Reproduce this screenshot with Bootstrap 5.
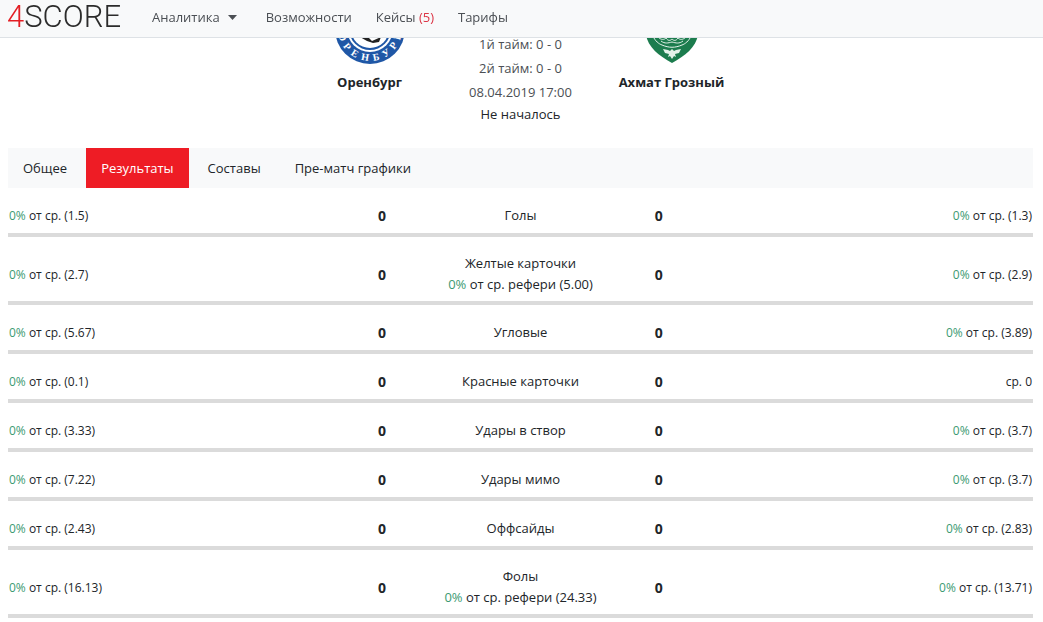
<!DOCTYPE html>
<html lang="ru">
<head>
<meta charset="utf-8">
<meta name="viewport" content="width=device-width, initial-scale=1">
<title>4SCORE — Оренбург – Ахмат Грозный</title>
<link href="https://cdn.jsdelivr.net/npm/bootstrap@5.3.0/dist/css/bootstrap.min.css" rel="stylesheet">
<style>
  body { font-family: "Open Sans", "Noto Sans", sans-serif; font-size: 13px; line-height: 21px; color: #212529; }
  .topbar { height: 38px; background: #f8f9fa; border-bottom: 1px solid #dee2e6; padding: 0 7px 3px; }
  .brand { font-family: Roboto, "Open Sans", sans-serif; font-weight: 300; font-size: 31px; line-height: 32px; color: #2b2b2b; width: 117px; }
  .brand span { color: #e31e24; }
  .topbar .nav-link { color: #4b4f54; padding: 0 12px; }
  .topbar .nav-link .count { color: #dc3545; }
  .caret { width: 9px; height: 5px; margin: 0 5px 0 8px; }
  .team { width: 150px; }
  .team h2 { font-size: 13px; line-height: 21px; font-weight: 700; }
  .crest { height: 65px; margin-bottom: 7px; }
  .facts { width: 152px; padding-top: 32px; color: #4b4f54; }
  .facts div { line-height: 24px; }
  .facts .state { line-height: 20px; color: #212529; }
  .tabs { background: #f8f9fa; height: 40px; margin-top: 24px; gap: 4px; }
  .tabs .nav-link { color: #212529; border-radius: 0; padding: 9px 15px; line-height: 22px; }
  .tabs .nav-link.active { background: #ee1c25; color: #fff; }
  .stats { table-layout: fixed; }
  .stats td, .stats th { border-bottom: 4px solid #dbdbdb; padding: 16px 1px 6px; line-height: 21px; }
  .stats .side { width: 33.5%; font-size: 12px; }
  .stats .num { width: 6%; font-size: 14px; font-weight: 700; line-height: 23px; }
  .pct { color: #3c9a72; }
  .page { padding: 0 10px 0 8px; }
</style>
</head>
<body>
<nav class="topbar fixed-top d-flex align-items-center" aria-label="Главное меню">
  <a class="brand text-decoration-none" href="#"><span>4</span>SCORE</a>
  <ul class="nav ms-3">
    <li><a class="nav-link d-flex align-items-center" href="#">Аналитика<svg class="caret" viewBox="0 0 9 5" aria-hidden="true"><path d="M0 0h9L4.500 5z" fill="currentColor"/></svg></a></li>
    <li><a class="nav-link" href="#">Возможности</a></li>
    <li><a class="nav-link" href="#">Кейсы <span class="count">(5)</span></a></li>
    <li><a class="nav-link" href="#">Тарифы</a></li>
  </ul>
</nav>
<main class="page">
  <header class="d-flex justify-content-center text-center">
    <div class="team">
      <svg class="crest" width="70" height="65" viewBox="0 6 70 65" aria-hidden="true">
        <defs><path id="ring" d="M3 35a32 32 0 0 0 64 0"/></defs>
        <circle cx="35" cy="35" r="35" fill="#1f57a6"/>
        <circle cx="35" cy="35" r="23" fill="#fff"/>
        <circle cx="35" cy="35" r="21" fill="#1f57a6"/>
        <circle cx="35" cy="35" r="19" fill="#fff"/>
        <path d="M25 43l9 1 3 3 9-4-2 5-6 1-6-2z" fill="#222"/>
        <text font-family="Liberation Serif, serif" font-weight="700" font-size="10" fill="#fff" text-anchor="middle"><textPath href="#ring" startOffset="50%">О&nbsp;&nbsp;Р&nbsp;&nbsp;Е&nbsp;&nbsp;Н&nbsp;&nbsp;Б&nbsp;&nbsp;У&nbsp;&nbsp;Р&nbsp;&nbsp;Г</textPath></text>
      </svg>
      <h2 class="mb-0">Оренбург</h2>
    </div>
    <div class="facts">
      <div>1й тайм: 0 - 0</div>
      <div>2й тайм: 0 - 0</div>
      <div>08.04.2019 17:00</div>
      <div class="state">Не началось</div>
    </div>
    <div class="team">
      <svg class="crest" width="70" height="65" viewBox="0 6 70 65" aria-hidden="true">
        <path d="M9 5h52v36c-2 12-13 21-26 28C22 62 11 53 9 41z" fill="#1c7c4e"/>
        <g fill="none" stroke="#e4f2ea" stroke-width="1">
          <path d="M16 42c2 5 6 8 9 9 7 3 13 3 20 0 3-1 7-4 9-9"/>
          <path d="M21 43c3 3 6 3 8 1 2 3 4 3 6 1 2 2 4 2 6-1 2 2 5 2 8-1"/>
          <path d="M24 47c4 3 7 2 11 1 4 1 7 2 11-1"/>
        </g>
        <path d="M26 55l5 1 2 1 2-2 2 2 2-1 5-1-2 4-4 1 1 3-2-1-2 3-2-3-2 1 1-3-4-1z" fill="#e4f2ea"/>
      </svg>
      <h2 class="mb-0">Ахмат Грозный</h2>
    </div>
  </header>
  <ul class="nav tabs">
    <li><a class="nav-link" href="#">Общее</a></li>
    <li><a class="nav-link active" href="#" aria-current="page">Результаты</a></li>
    <li><a class="nav-link" href="#">Составы</a></li>
    <li><a class="nav-link" href="#">Пре-матч графики</a></li>
  </ul>
  <table class="stats w-100 text-center align-middle">
    <tbody>
      <tr><td class="side text-start"><span class="pct">0%</span> от ср. (1.5)</td><td class="num">0</td><th class="fw-normal" scope="row">Голы</th><td class="num">0</td><td class="side text-end"><span class="pct">0%</span> от ср. (1.3)</td></tr>
      <tr><td class="side text-start"><span class="pct">0%</span> от ср. (2.7)</td><td class="num">0</td><th class="fw-normal" scope="row">Желтые карточки<br><span class="pct">0%</span> от ср. рефери (5.00)</th><td class="num">0</td><td class="side text-end"><span class="pct">0%</span> от ср. (2.9)</td></tr>
      <tr><td class="side text-start"><span class="pct">0%</span> от ср. (5.67)</td><td class="num">0</td><th class="fw-normal" scope="row">Угловые</th><td class="num">0</td><td class="side text-end"><span class="pct">0%</span> от ср. (3.89)</td></tr>
      <tr><td class="side text-start"><span class="pct">0%</span> от ср. (0.1)</td><td class="num">0</td><th class="fw-normal" scope="row">Красные карточки</th><td class="num">0</td><td class="side text-end">ср. 0</td></tr>
      <tr><td class="side text-start"><span class="pct">0%</span> от ср. (3.33)</td><td class="num">0</td><th class="fw-normal" scope="row">Удары в створ</th><td class="num">0</td><td class="side text-end"><span class="pct">0%</span> от ср. (3.7)</td></tr>
      <tr><td class="side text-start"><span class="pct">0%</span> от ср. (7.22)</td><td class="num">0</td><th class="fw-normal" scope="row">Удары мимо</th><td class="num">0</td><td class="side text-end"><span class="pct">0%</span> от ср. (3.7)</td></tr>
      <tr><td class="side text-start"><span class="pct">0%</span> от ср. (2.43)</td><td class="num">0</td><th class="fw-normal" scope="row">Оффсайды</th><td class="num">0</td><td class="side text-end"><span class="pct">0%</span> от ср. (2.83)</td></tr>
      <tr><td class="side text-start"><span class="pct">0%</span> от ср. (16.13)</td><td class="num">0</td><th class="fw-normal" scope="row">Фолы<br><span class="pct">0%</span> от ср. рефери (24.33)</th><td class="num">0</td><td class="side text-end"><span class="pct">0%</span> от ср. (13.71)</td></tr>
    </tbody>
  </table>
</main>
<script src="https://cdn.jsdelivr.net/npm/bootstrap@5.3.0/dist/js/bootstrap.bundle.min.js"></script>
</body>
</html>
